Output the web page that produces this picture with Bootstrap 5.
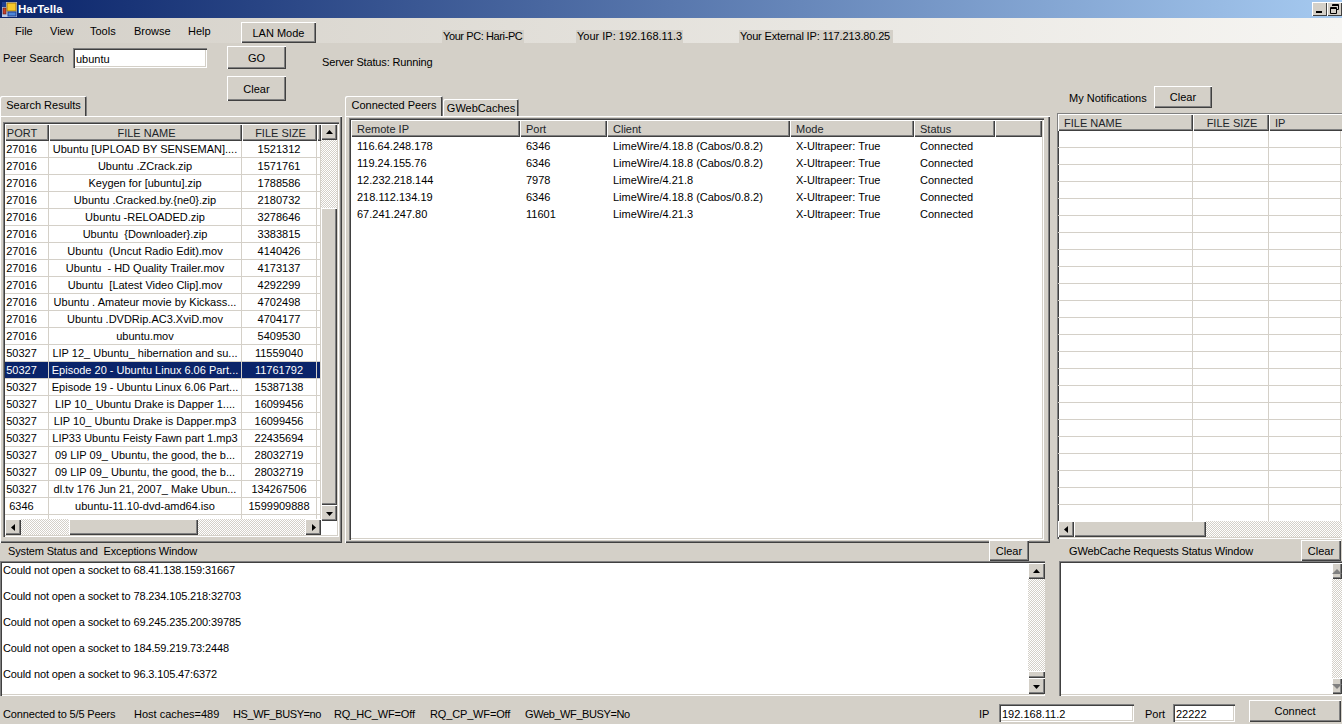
<!DOCTYPE html>
<html lang="en">
<head>
<meta charset="UTF-8" />
<title>HarTella</title>
<link href="https://cdn.jsdelivr.net/npm/bootstrap@5.3.3/dist/css/bootstrap.min.css" rel="stylesheet" />
<style>
  html, body { height: 100%; }
  body {
    width: 1342px; height: 724px; overflow: hidden; margin: 0;
    background: #d4d0c8; color: #000;
    font-family: "Liberation Sans", Arial, sans-serif; font-size: 11px; line-height: 14px;
  }
  .tight { letter-spacing: -.15px; }
  .tighter { letter-spacing: -.4px; }

  /* title + menu */
  .title-strip { height: 18px; background: linear-gradient(90deg, #0a246a, #a6caf0); color: #fff; font-weight: 700; font-size: 11.5px; padding-left: 2px; }
  .title-name { margin-left: 1px; }
  .cap-box { align-self: flex-start; margin-top: 2px; }
  .cap-btn { width: 15px; height: 14px; background: #d4d0c8; box-shadow: inset 1px 1px #fff, inset -1px -1px #404040; }
  .menu-strip { height: 25px; background: linear-gradient(90deg, #d4d0c8, #f6f5f2); }
  .sys-label { background: #d4d0c8; height: 13px; align-self: flex-end; padding: 0 1px; line-height: 13px; white-space: nowrap; }

  /* classic raised buttons */
  .win-btn {
    background: #d4d0c8; color: #000; border: 0; border-radius: 0; padding: 0; flex-shrink: 0;
    font-size: 11px; line-height: 14px;
    box-shadow: inset 1px 1px #fff, inset -1px -1px #404040, inset -2px -2px #808080;
  }
  .win-btn:hover, .win-btn:active { background: #d4d0c8; color: #000; }
  .win-input {
    background: #fff; border-radius: 0; border: 0; padding: 1px 0 0 3px; font-size: 11px; line-height: 14px; color: #000; min-height: 0;
    box-shadow: inset 1px 1px #808080, inset 2px 2px #404040, inset -1px -1px #fff, inset -2px -2px #d4d0c8;
  }
  .win-input:focus { box-shadow: inset 1px 1px #808080, inset 2px 2px #404040, inset -1px -1px #fff, inset -2px -2px #d4d0c8; background: #fff; }

  /* tabs */
  .tab-row { height: 20px; align-items: flex-end; border: 0; flex-wrap: nowrap; }
  .tab-item { background: #d4d0c8; color: #000; box-shadow: inset 1px 1px #fff, inset -1px 0 #808080, inset -2px 0 #404040; border-radius: 2px 2px 0 0; text-align: center; }
  .tab-on { height: 20px; line-height: 19px; position: relative; z-index: 1; }
  .tab-off { height: 17px; line-height: 18px; }
  .tab-body { box-shadow: inset 1px 1px #fff, inset -1px -1px #404040, inset -2px -2px #808080; }

  /* list views */
  .list-box { box-shadow: inset 1px 1px #808080, inset 2px 2px #404040, inset -1px -1px #fff, inset -2px -2px #d4d0c8; padding: 2px; background: #fff; overflow: hidden; }
  .win-table { table-layout: fixed; border-collapse: separate; border-spacing: 0; margin: 0; font-size: 11px; line-height: 14px; --bs-table-bg: transparent; }
  .win-table th { font-weight: 400; height: 17px; padding: 0 0 0 6px; background: #d4d0c8; border: 0; vertical-align: middle; box-shadow: inset 1px 1px #fff, inset -1px -1px #404040, inset -2px -2px #808080; white-space: nowrap; overflow: hidden; }
  .win-table td { height: 17px; padding: 0 2px 0 6px; vertical-align: middle; white-space: nowrap; overflow: hidden; border: 0; color: #000; }
  .win-table th.mid, .win-table td.mid { text-align: center; padding-left: 2px; }
  .win-table th.port-cell, .win-table td.port-cell { text-align: center; padding: 0 10px 0 0; }
  .grid-on td { border-right: 1px solid #d4d0c8; border-bottom: 1px solid #d4d0c8; }
  .win-table tr.row-sel td { background: #0a246a; color: #fff; --bs-table-color-state: #fff; box-shadow: none; }

  /* scrollbars */
  .sb-btn { width: 100%; height: 16px; flex: none; background: #d4d0c8; box-shadow: inset 1px 1px #fff, inset -1px -1px #404040, inset -2px -2px #808080; display: flex; align-items: center; justify-content: center; }
  .sb-h .sb-btn { width: 16px; height: 100%; }
  .sb-dither { background: repeating-conic-gradient(#fff 0 25%, #d4d0c8 0 50%) 0 0 / 2px 2px; }
  .sb-thumb { background: #d4d0c8; box-shadow: inset 1px 1px #fff, inset -1px -1px #404040, inset -2px -2px #808080; }
  .sb-v { width: 17px; flex: none; }
  .sb-h { height: 16px; flex: none; }

  /* left / middle / right columns */
  .top-band { height: 53px; }
  .main-area { height: 447px; }
  .col-left { width: 342px; margin-right: 3px; }
  .col-mid { width: 705px; margin-right: 7px; }
  .col-right { width: 285px; margin-top: -10px; }
  .bottom-area { height: 154px; }
  .foot-bar { height: 27px; }
  .log-line { height: 26px; padding-left: 1px; white-space: nowrap; letter-spacing: -.13px; }
</style>
</head>
<body>
  <div class="title-strip d-flex align-items-center">
    <svg width="15" height="15" viewBox="0 0 15 15" class="flex-shrink-0">
      <rect x="0" y="0" width="15" height="15" fill="#b8c8e8" />
      <rect x="0" y="0" width="4" height="5" fill="#1e3f8f" />
      <rect x="1" y="6" width="3" height="6" fill="#c8402c" stroke="#5a1a10" stroke-width=".6" />
      <rect x="5" y="1" width="9" height="8" fill="#f6c92c" stroke="#a07a10" />
      <rect x="6" y="10" width="8" height="4" fill="#4d86d8" stroke="#1e3f8f" />
    </svg>
    <span class="title-name">HarTella</span>
    <div class="d-flex ms-auto cap-box">
      <div class="cap-btn d-flex justify-content-center">
        <svg width="15" height="14"><rect x="4" y="9" width="6" height="2" fill="#000" /></svg>
      </div>
      <div class="cap-btn d-flex justify-content-center">
        <svg width="15" height="14"><path d="M5.5 4V2.5h6v5H10M5.5 3.5h6M3.5 5.5h6v6h-6zM3.5 6.5h6" fill="none" stroke="#000" /></svg>
      </div>
    </div>
  </div>

  <div class="menu-strip d-flex align-items-center">
    <span style="margin-left:15px;width:35px">File</span>
    <span style="width:40px">View</span>
    <span style="width:44px">Tools</span>
    <span style="width:54px">Browse</span>
    <span style="width:53px">Help</span>
    <button class="btn win-btn" style="width:75px;height:21px;margin-top:4px">LAN Mode</button>
    <span class="sys-label tighter" style="margin-left:126px;width:82px">Your PC: Hari-PC</span>
    <span class="sys-label" style="margin-left:52px;width:107px">Your IP: 192.168.11.3</span>
    <span class="sys-label tight" style="margin-left:56px;width:154px">Your External IP: 117.213.80.25</span>
  </div>

  <div class="top-band d-flex">
    <label style="margin:8px 0 0 3px;width:70px">Peer Search</label>
    <input class="form-control win-input" style="width:134px;height:20px;margin-top:5px" value="ubuntu" />
    <div class="d-flex flex-column" style="margin:3px 0 0 20px;gap:7px">
      <button class="btn win-btn" style="width:59px;height:23px">GO</button>
      <button class="btn win-btn position-relative" style="width:59px;height:25px;z-index:2">Clear</button>
    </div>
    <span class="tight" style="margin:12px 0 0 36px">Server Status: Running</span>
  </div>

  <div class="main-area d-flex">
    <div class="col-left d-flex flex-column">
      <ul class="nav tab-row">
        <li class="tab-item tab-on" style="width:87px">Search Results</li>
      </ul>
      <div class="tab-body flex-grow-1 d-flex" style="padding:6px 3px 5px 3px;height:422px">
        <div class="list-box d-flex" style="width:336px;height:415px">
          <div class="d-flex flex-column" style="width:316px">
            <div class="flex-grow-1 overflow-hidden">
              <table class="table win-table" style="width:316px">
                <colgroup><col style="width:44px" /><col style="width:193px" /><col style="width:75px" /><col style="width:4px" /></colgroup>
                <thead><tr><th class="port-cell">PORT</th><th class="mid">FILE NAME</th><th class="mid">FILE SIZE</th><th></th></tr></thead>
                <tbody id="search-body" class="grid-on"></tbody>
              </table>
            </div>
            <div class="sb-h d-flex">
              <div class="sb-btn"><svg width="5" height="7"><polygon points="4,0 4,7 0,3.5" /></svg></div>
              <div class="sb-dither" style="width:48px"></div>
              <div class="sb-thumb" style="width:129px"></div>
              <div class="sb-dither" style="width:107px"></div>
              <div class="sb-btn"><svg width="5" height="7"><polygon points="1,0 1,7 5,3.5" /></svg></div>
            </div>
          </div>
          <div class="sb-v d-flex flex-column" style="height:397px;width:16px">
            <div class="sb-btn"><svg width="7" height="5"><polygon points="3.5,0 7,4 0,4" /></svg></div>
            <div class="sb-dither" style="height:68px"></div>
            <div class="sb-thumb flex-grow-1"></div>
            <div class="sb-btn"><svg width="7" height="5"><polygon points="0,1 7,1 3.5,5" /></svg></div>
          </div>
        </div>
      </div>
    </div>

    <div class="col-mid d-flex flex-column">
      <ul class="nav tab-row">
        <li class="tab-item tab-on" style="width:98px">Connected Peers</li>
        <li class="tab-item tab-off" style="width:76px">GWebCaches</li>
      </ul>
      <div class="tab-body flex-grow-1 d-flex" style="padding:2px 3px 3px 4px">
        <div class="list-box" style="width:695px;height:422px">
          <table class="table win-table" style="width:691px">
            <colgroup><col style="width:169px" /><col style="width:87px" /><col style="width:183px" /><col style="width:124px" /><col style="width:81px" /><col style="width:47px" /></colgroup>
            <thead><tr><th>Remote IP</th><th>Port</th><th>Client</th><th>Mode</th><th>Status</th><th></th></tr></thead>
            <tbody id="peer-body"></tbody>
          </table>
        </div>
      </div>
    </div>

    <div class="col-right d-flex flex-column">
      <div class="d-flex align-items-center" style="height:27px;padding:0 0 5px 12px">
        <span style="width:85px;padding-top:2px">My Notifications</span>
        <button class="btn win-btn" style="width:58px;height:22px">Clear</button>
      </div>
      <div class="list-box d-flex flex-column" style="padding:1px 0 2px 1px;height:426px">
        <div class="flex-grow-1 overflow-hidden">
          <table class="table win-table" style="width:291px">
            <colgroup><col style="width:135px" /><col style="width:76px" /><col style="width:80px" /></colgroup>
            <thead><tr><th>FILE NAME</th><th class="mid">FILE SIZE</th><th>IP</th></tr></thead>
            <tbody id="note-body" class="grid-on"></tbody>
          </table>
        </div>
        <div class="sb-h d-flex">
          <div class="sb-btn"><svg width="5" height="7"><polygon points="4,0 4,7 0,3.5" /></svg></div>
          <div class="sb-thumb" style="width:132px"></div>
          <div class="sb-dither flex-grow-1"></div>
        </div>
      </div>
    </div>
  </div>

  <div class="bottom-area d-flex">
    <div class="d-flex flex-column" style="width:1045px">
      <div class="d-flex" style="height:18px">
        <span class="tight" style="margin:1px 0 0 8px">System Status and&nbsp; Exceptions Window</span>
        <button class="btn win-btn ms-auto" style="width:40px;height:21px;margin:-3px 16px 0 0;position:relative;z-index:2">Clear</button>
      </div>
      <div class="list-box d-flex" style="height:135px;padding:2px 0 2px 2px">
        <div class="flex-grow-1" id="log-lines"></div>
        <div class="sb-v d-flex flex-column">
          <div class="sb-btn"><svg width="7" height="5"><polygon points="3.5,0 7,4 0,4" /></svg></div>
          <div class="sb-dither flex-grow-1"></div>
          <div class="sb-thumb" style="height:7px"></div>
          <div class="sb-btn"><svg width="7" height="5"><polygon points="0,1 7,1 3.5,5" /></svg></div>
        </div>
      </div>
    </div>
    <div class="d-flex flex-column" style="width:283px;margin-left:14px">
      <div class="d-flex" style="height:18px">
        <span class="tight" style="margin:1px 0 0 10px">GWebCache Requests Status Window</span>
        <button class="btn win-btn ms-auto" style="width:40px;height:21px;margin:-3px 1px 0 0;position:relative;z-index:2">Clear</button>
      </div>
      <div class="list-box d-flex justify-content-end" style="height:135px;padding:2px 0">
        <div class="sb-v d-flex flex-column" style="width:10px;overflow:hidden">
          <div class="sb-btn justify-content-start"><svg width="10" height="5"><polygon points="5,0 10,5 0,5" fill="#808080" /></svg></div>
          <div class="sb-dither flex-grow-1"></div>
          <div class="sb-btn justify-content-start"><svg width="10" height="5"><polygon points="0,0 10,0 5,5" fill="#808080" /></svg></div>
        </div>
      </div>
    </div>
  </div>

  <div class="foot-bar d-flex">
    <div class="d-flex" style="margin-top:10px;padding-left:3px">
      <span class="tight" style="width:131px">Connected to 5/5 Peers</span>
      <span style="width:99px">Host caches=489</span>
      <span class="tighter" style="width:101px">HS_WF_BUSY=no</span>
      <span class="tight" style="width:96px">RQ_HC_WF=Off</span>
      <span class="tight" style="width:95px">RQ_CP_WF=Off</span>
      <span class="tighter">GWeb_WF_BUSY=No</span>
    </div>
    <div class="d-flex ms-auto align-items-start" style="padding:3px 1px 0 0">
      <span style="margin-top:7px;width:20px">IP</span>
      <input class="form-control win-input" style="width:135px;height:18px;margin-top:4px" value="192.168.11.2" />
      <span style="margin:7px 0 0 11px;width:28px">Port</span>
      <input class="form-control win-input" style="width:62px;height:18px;margin-top:4px" value="22222" />
      <button class="btn win-btn" style="width:92px;height:22px;margin-left:14px">Connect</button>
    </div>
  </div>

  <script src="https://cdn.jsdelivr.net/npm/bootstrap@5.3.3/dist/js/bootstrap.bundle.min.js"></script>
  <script>
    const results = [
      ["27016", "Ubuntu [UPLOAD BY SENSEMAN]....", "1521312"],
      ["27016", "Ubuntu .ZCrack.zip", "1571761"],
      ["27016", "Keygen for [ubuntu].zip", "1788586"],
      ["27016", "Ubuntu .Cracked.by.{ne0}.zip", "2180732"],
      ["27016", "Ubuntu -RELOADED.zip", "3278646"],
      ["27016", "Ubuntu&nbsp; {Downloader}.zip", "3383815"],
      ["27016", "Ubuntu&nbsp; (Uncut Radio Edit).mov", "4140426"],
      ["27016", "Ubuntu&nbsp; - HD Quality Trailer.mov", "4173137"],
      ["27016", "Ubuntu&nbsp; [Latest Video Clip].mov", "4292299"],
      ["27016", "Ubuntu . Amateur movie by Kickass...", "4702498"],
      ["27016", "Ubuntu .DVDRip.AC3.XviD.mov", "4704177"],
      ["27016", "ubuntu.mov", "5409530"],
      ["50327", "LIP 12_ Ubuntu_ hibernation and su...", "11559040"],
      ["50327", "Episode 20 - Ubuntu Linux 6.06 Part...", "11761792"],
      ["50327", "Episode 19 - Ubuntu Linux 6.06 Part...", "15387138"],
      ["50327", "LIP 10_ Ubuntu Drake is Dapper 1....", "16099456"],
      ["50327", "LIP 10_ Ubuntu Drake is Dapper.mp3", "16099456"],
      ["50327", "LIP33 Ubuntu Feisty Fawn part 1.mp3", "22435694"],
      ["50327", "09 LIP 09_ Ubuntu, the good, the b...", "28032719"],
      ["50327", "09 LIP 09_ Ubuntu, the good, the b...", "28032719"],
      ["50327", "dl.tv 176 Jun 21, 2007_ Make Ubun...", "134267506"],
      ["6346", "ubuntu-11.10-dvd-amd64.iso", "1599909888"],
      ["", "", ""]
    ];
    document.getElementById("search-body").innerHTML = results.map((r, i) =>
      `<tr class="${i === 13 ? "row-sel" : ""}"><td class="port-cell">${r[0]}</td><td class="mid">${r[1]}</td><td class="mid">${r[2]}</td><td></td></tr>`
    ).join("");

    const limeCabos = "LimeWire/4.18.8 (Cabos/0.8.2)";
    const peers = [
      ["116.64.248.178", "6346", limeCabos],
      ["119.24.155.76", "6346", limeCabos],
      ["12.232.218.144", "7978", "LimeWire/4.21.8"],
      ["218.112.134.19", "6346", limeCabos],
      ["67.241.247.80", "11601", "LimeWire/4.21.3"]
    ];
    document.getElementById("peer-body").innerHTML = peers.map(p =>
      `<tr><td>${p[0]}</td><td>${p[1]}</td><td>${p[2]}</td><td>X-Ultrapeer: True</td><td>Connected</td><td></td></tr>`
    ).join("");

    document.getElementById("note-body").innerHTML = "<tr><td></td><td></td><td></td></tr>".repeat(24);

    const sockets = ["68.41.138.159:31667", "78.234.105.218:32703", "69.245.235.200:39785", "184.59.219.73:2448", "96.3.105.47:6372"];
    document.getElementById("log-lines").innerHTML = sockets.map(s =>
      `<div class="log-line">Could not open a socket to ${s}</div>`
    ).join("");
  </script>
</body>
</html>
